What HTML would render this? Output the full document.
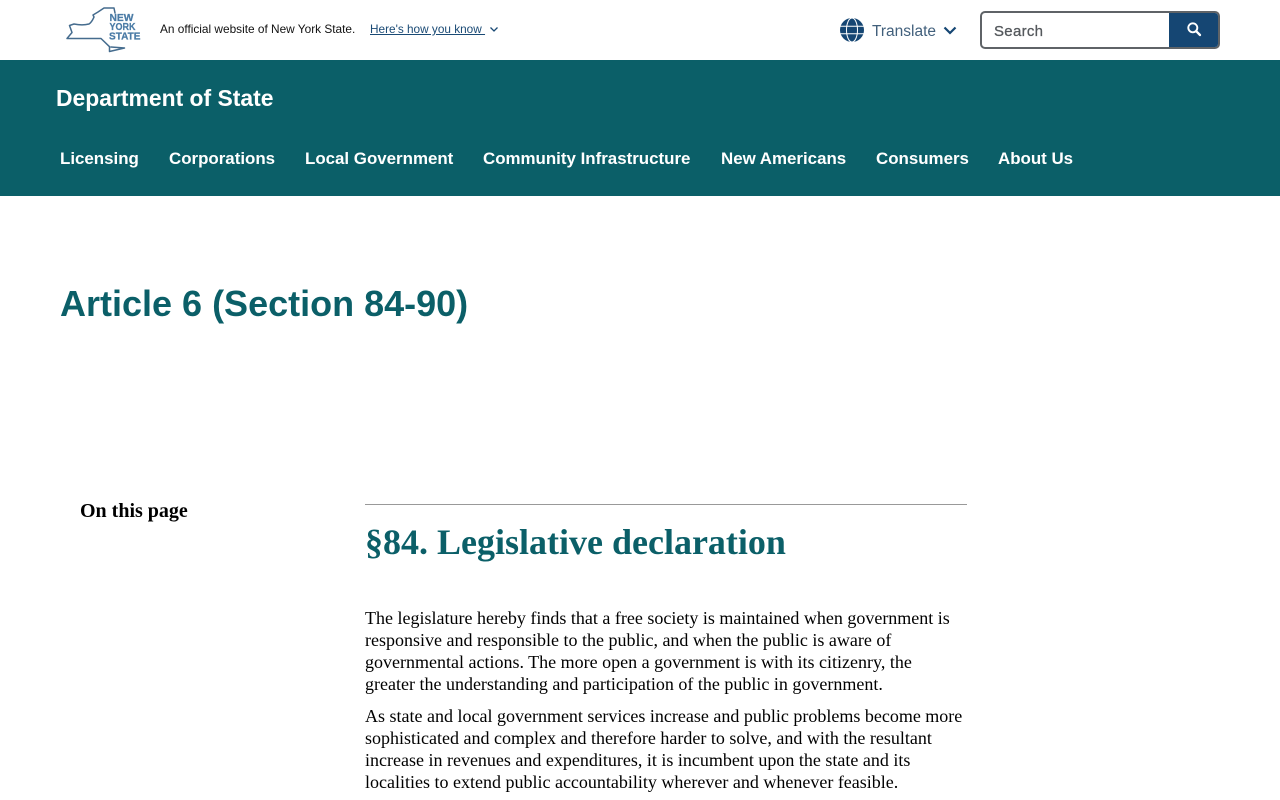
<!DOCTYPE html>
<html lang="en">
<head>
<meta charset="utf-8">
<title>Article 6 (Section 84-90)</title>
<style>
html,body{margin:0;padding:0;background:#fff;width:1280px;height:800px;overflow:hidden}
body{position:relative;font-family:"Liberation Sans",sans-serif;color:#000}
.a{position:absolute;white-space:nowrap}
#band{position:absolute;left:0;top:60px;width:1280px;height:136px;background:#0b5f68}
.nav{position:absolute;top:149px;font-size:16.9px;line-height:19px;font-weight:700;color:#fff;white-space:nowrap}
.p{position:absolute;left:365px;font-family:"Liberation Serif",serif;font-size:18px;line-height:22px;white-space:nowrap;color:#000}
</style>
</head>
<body>
<svg class="a" style="left:65px;top:5px" width="80" height="50" viewBox="0 0 80 50">
<path d="M2 33.5 L7 27.5 L4.5 20.5 L9 19 C14 20 20 20 24 19 C27 17 28 14 29 12 L28 10 L33 7 L39 3 L49 3 L50 8 M2 33.5 L36 33.5 L44.5 41.7 L44.5 46.5 L59.5 43 L46 42" fill="none" stroke="#456c8e" stroke-width="1.5" stroke-linejoin="round" stroke-linecap="round"/>
<g font-family="Liberation Sans" font-weight="700" font-size="10" fill="#4a7ba6" stroke="#4a7ba6" stroke-width=".25">
<text x="44.5" y="16" textLength="24" lengthAdjust="spacingAndGlyphs">NEW</text>
<text x="44.5" y="25.2" textLength="26" lengthAdjust="spacingAndGlyphs">YORK</text>
<text x="44" y="34.5" textLength="31.5" lengthAdjust="spacingAndGlyphs">STATE</text>
</g>
</svg>
<div class="a" style="left:160px;top:22px;font-size:11.85px;line-height:15px;color:#111">An official website of New York State.</div>
<div class="a" style="left:370px;top:22px;font-size:11.8px;line-height:15px;color:#1a4a75;text-decoration:underline;white-space:pre">Here's how you know </div>
<svg class="a" style="left:489px;top:26px" width="10" height="8" viewBox="0 0 10 8"><path d="M1.5 1.5 L5 5 L8.5 1.5" fill="none" stroke="#1a4a75" stroke-width="1.3"/></svg>
<svg class="a" style="left:840px;top:18px" width="24" height="24" viewBox="0 0 24 24">
<circle cx="12" cy="12" r="12" fill="#154673"/>
<path d="M0 8.3H24M0 15.7H24" stroke="#fff" stroke-width="1"/>
<ellipse cx="12" cy="12" rx="5.5" ry="12" fill="none" stroke="#fff" stroke-width="1"/>
</svg>
<div class="a" style="left:872px;top:23px;font-size:15.5px;line-height:18px;color:#42607c">Translate</div>
<svg class="a" style="left:943px;top:25px" width="14" height="11" viewBox="0 0 14 11"><path d="M1.5 2.5 L7 8 L12.5 2.5" fill="none" stroke="#154673" stroke-width="2.2"/></svg>
<div class="a" style="left:980px;top:11px;width:240px;height:38px;box-sizing:border-box;border:2px solid #5f6367;border-radius:5px;background:#fff"></div>
<div class="a" style="left:1169px;top:13px;width:49px;height:34px;background:#154673;border-radius:0 3px 3px 0"></div>
<div class="a" style="left:994px;top:23px;font-size:15px;line-height:18px;color:#54585c;letter-spacing:.3px;-webkit-text-stroke:.3px #54585c">Search</div>
<svg class="a" style="left:1186px;top:21px" width="16" height="16" viewBox="0 0 16 16"><circle cx="6.8" cy="6.8" r="4.5" fill="none" stroke="#fff" stroke-width="1.9"/><path d="M10.2 10.2 L14 14" stroke="#fff" stroke-width="2.3" stroke-linecap="round"/></svg>
<div id="band"></div>
<div class="a" style="left:56px;top:85px;font-size:22.9px;line-height:27px;font-weight:700;color:#fff">Department of State</div>
<div class="nav" style="left:60px">Licensing</div>
<div class="nav" style="left:169px">Corporations</div>
<div class="nav" style="left:305px">Local Government</div>
<div class="nav" style="left:483px">Community Infrastructure</div>
<div class="nav" style="left:721px">New Americans</div>
<div class="nav" style="left:876px">Consumers</div>
<div class="nav" style="left:998px">About Us</div>
<div class="a" style="left:60px;top:283px;font-size:36px;line-height:42px;font-weight:700;color:#0b5f68">Article 6 (Section 84-90)</div>
<div class="a" style="left:80px;top:499px;font-family:'Liberation Serif',serif;font-size:20px;line-height:24px;font-weight:700">On this page</div>
<div class="a" style="left:365px;top:504px;width:602px;height:1px;background:#999"></div>
<div class="a" style="left:365px;top:521px;font-family:'Liberation Serif',serif;font-size:36px;line-height:42px;font-weight:700;color:#0b5f68">§84. Legislative declaration</div>
<div class="p" style="top:607px">The legislature hereby finds that a free society is maintained when government is</div>
<div class="p" style="top:629px">responsive and responsible to the public, and when the public is aware of</div>
<div class="p" style="top:651px">governmental actions. The more open a government is with its citizenry, the</div>
<div class="p" style="top:673px">greater the understanding and participation of the public in government.</div>
<div class="p" style="top:705px">As state and local government services increase and public problems become more</div>
<div class="p" style="top:727px">sophisticated and complex and therefore harder to solve, and with the resultant</div>
<div class="p" style="top:749px">increase in revenues and expenditures, it is incumbent upon the state and its</div>
<div class="p" style="top:771px">localities to extend public accountability wherever and whenever feasible.</div>
</body>
</html>
